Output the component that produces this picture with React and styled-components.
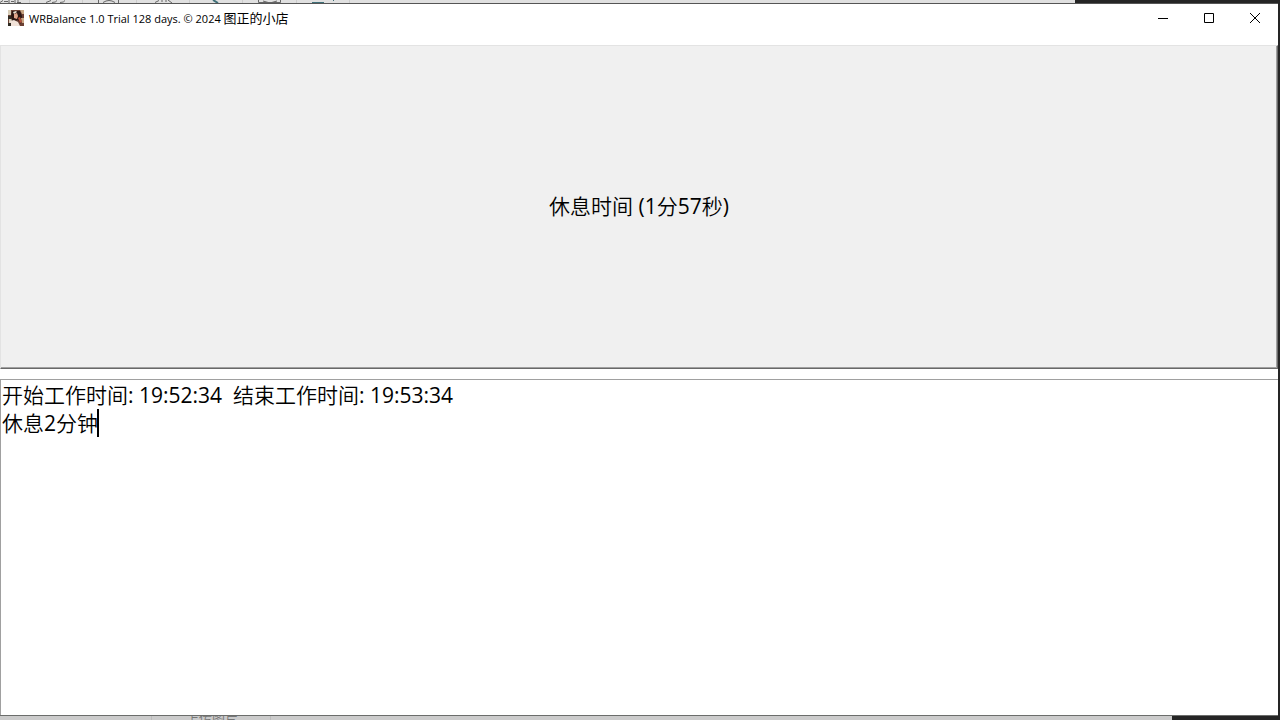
import React, { useState } from "react";
import styled, { createGlobalStyle } from "styled-components";

const App = () => {
  const [log, setLog] = useState(
    "开始工作时间: 19:52:34  结束工作时间: 19:53:34\n休息2分钟"
  );

  return (
    <Desktop>
      <GlobalStyle />
      <Strip>
        <TopPanel>
          <Scraps width="350" height="3" viewBox="0 0 350 3" aria-hidden="true">
            <path
              d="M0 2.500l3-2M4 1.500h4M9 0v3M11 1.500h3M15 0v3M17 2.500h4M18 0v2M46 2.500l5-2M52 2.500q4 0 5-2M60 2.500q4 0 5-2M98.500 0v3M103 2.500q6-4 12 0M118.500 0v3M155 2.500l4-2M162 0v2M166 0v2M168 0l4 3M258.500 0v2.500h22V0M263 1l7 2 7-2"
              stroke="#666"
              fill="none"
            />
            <path d="M213 0l5 3" stroke="#3f6f78" strokeWidth="2" />
            <path d="M312 2.500h12M333.500 0v1" stroke="#3f6f78" />
            <path d="M29.500 0v3M82.500 0v3M136.500 0v3M189.500 0v3M242.500 0v3M296.500 0v3M349.500 0v3" stroke="#ccc" />
          </Scraps>
        </TopPanel>
      </Strip>
      <Window>
        <TitleBar>
          <AppIcon />
          <Title>
            WRBalance 1.0 Trial 128 days. © 2024 <ShopName>图正的小店</ShopName>
          </Title>
          <Controls>
            <ControlButton aria-label="Minimize">
              <Glyph d="M0 5.500h10" />
            </ControlButton>
            <ControlButton aria-label="Maximize">
              <Glyph d="M.5 .5h9v9h-9z" />
            </ControlButton>
            <ControlButton aria-label="Close">
              <Glyph d="M0 0l10 10M10 0L0 10" />
            </ControlButton>
          </Controls>
        </TitleBar>
        <TimerButton>休息时间 (1分57秒)</TimerButton>
        <LogArea>
          <LogText
            aria-label="Log"
            spellCheck={false}
            value={log}
            onChange={(e) => setLog(e.target.value)}
          />
          <Caret />
        </LogArea>
      </Window>
      <Strip $bottom>
        <BottomPanel>
          <UploadCell>上传图片</UploadCell>
        </BottomPanel>
      </Strip>
    </Desktop>
  );
};

const Glyph = ({ d }) => (
  <svg width="10" height="10" viewBox="0 0 10 10" aria-hidden="true">
    <path d={d} stroke="#000" fill="none" />
  </svg>
);

const AppIcon = () => (
  <svg width="16" height="16" viewBox="0 0 16 16" aria-hidden="true">
    <path d="M0 0h16v16H0z" fill="#6b4034" />
    <path d="M0 0h3v5H0zM1 9h3v4H1z" fill="#d8cdb8" />
    <path d="M4 1h8l2 5-1 8-3-4-6 2-1-6z" fill="#2b1613" />
    <path d="M5 2l3-1 1 1-3 2z" fill="#efe4d6" />
    <path d="M6 4l3-1 1 3-1 3-3-1z" fill="#e0a48a" />
    <path d="M2 11l4-1 4 2 2 4H3z" fill="#f1e2d8" />
    <path d="M12 0h4v4h-2zM13 8h3v5h-2z" fill="#c9a784" />
    <path d="M0 6h3v3H0zM0 13h3v3H0z" fill="#2f2a22" />
    <path d="M10 8l2-1 2 5-2 1z" fill="#b4523d" />
  </svg>
);

export default App;

const GlobalStyle = createGlobalStyle`
  * {
    box-sizing: border-box;
  }
  body {
    margin: 0;
    font-family: "Open Sans", "Noto Sans CJK SC DemiLight", "Noto Sans CJK SC", sans-serif;
    color: #000;
  }
`;

const Desktop = styled.div`
  display: flex;
  flex-direction: column;
  height: 100vh;
  background: #252525;
`;

const Strip = styled.div`
  flex: none;
  height: ${(p) => (p.$bottom ? 4 : 3)}px;
  overflow: hidden;
`;

const TopPanel = styled.div`
  width: 84%;
  height: 100%;
  background: #e0e0e0;
`;

const Scraps = styled.svg`
  display: block;
`;

const BottomPanel = styled.div`
  display: flex;
  height: 100%;
  margin-right: 108px;
  padding-left: 151px;
  background: #cbcbcb;
`;

const UploadCell = styled.span`
  width: 120px;
  padding-left: 34px;
  border: 1px solid #bbb;
  border-width: 0 1px;
  font-size: 13px;
  line-height: 4px;
  color: #777;
`;

const Window = styled.main`
  flex: 1;
  min-height: 0;
  display: flex;
  flex-direction: column;
  margin-right: 2px;
  background: #fff;
  border-top: 1px solid #555;
  border-bottom: 1px solid #6b6d6b;
`;

const TitleBar = styled.header`
  flex: none;
  display: flex;
  align-items: center;
  height: 28px;
  padding-left: 8px;
  margin-bottom: 13px;
`;

const Title = styled.h1`
  flex: 1;
  margin: 0 0 0 5px;
  font-size: 11px;
  font-weight: 400;
  line-height: 16px;
`;

const ShopName = styled.span`
  font-family: "Noto Sans CJK SC", sans-serif;
  font-size: 13px;
`;

const Controls = styled.div`
  display: flex;
  height: 100%;
`;

const ControlButton = styled.button`
  display: flex;
  align-items: center;
  justify-content: center;
  width: 46px;
  padding: 0;
  border: 0;
  background: none;
`;

const TimerButton = styled.button`
  flex: none;
  height: 45vh;
  padding: 0 0 2px;
  border: 1px solid;
  border-color: #e3e3e3 #696969 #696969 #e3e3e3;
  box-shadow: inset -1px -1px #a0a0a0;
  background: #f0f0f0;
  font-family: inherit;
  font-size: 21px;
  line-height: 28px;
  color: #000;
`;

const LogArea = styled.div`
  position: relative;
  flex: 1;
  min-height: 0;
  display: flex;
  margin-top: 10px;
  border: 1px solid #a0a0a0;
  border-width: 1px 0 0 1px;
`;

const LogText = styled.textarea`
  flex: 1;
  padding: 1px;
  border: 0;
  outline: 0;
  resize: none;
  background: #fff;
  font-family: inherit;
  font-size: 21px;
  line-height: 28px;
  color: #000;
`;

const Caret = styled.span`
  position: absolute;
  left: 96px;
  top: 29px;
  width: 2px;
  height: 28px;
  background: #000;
`;
